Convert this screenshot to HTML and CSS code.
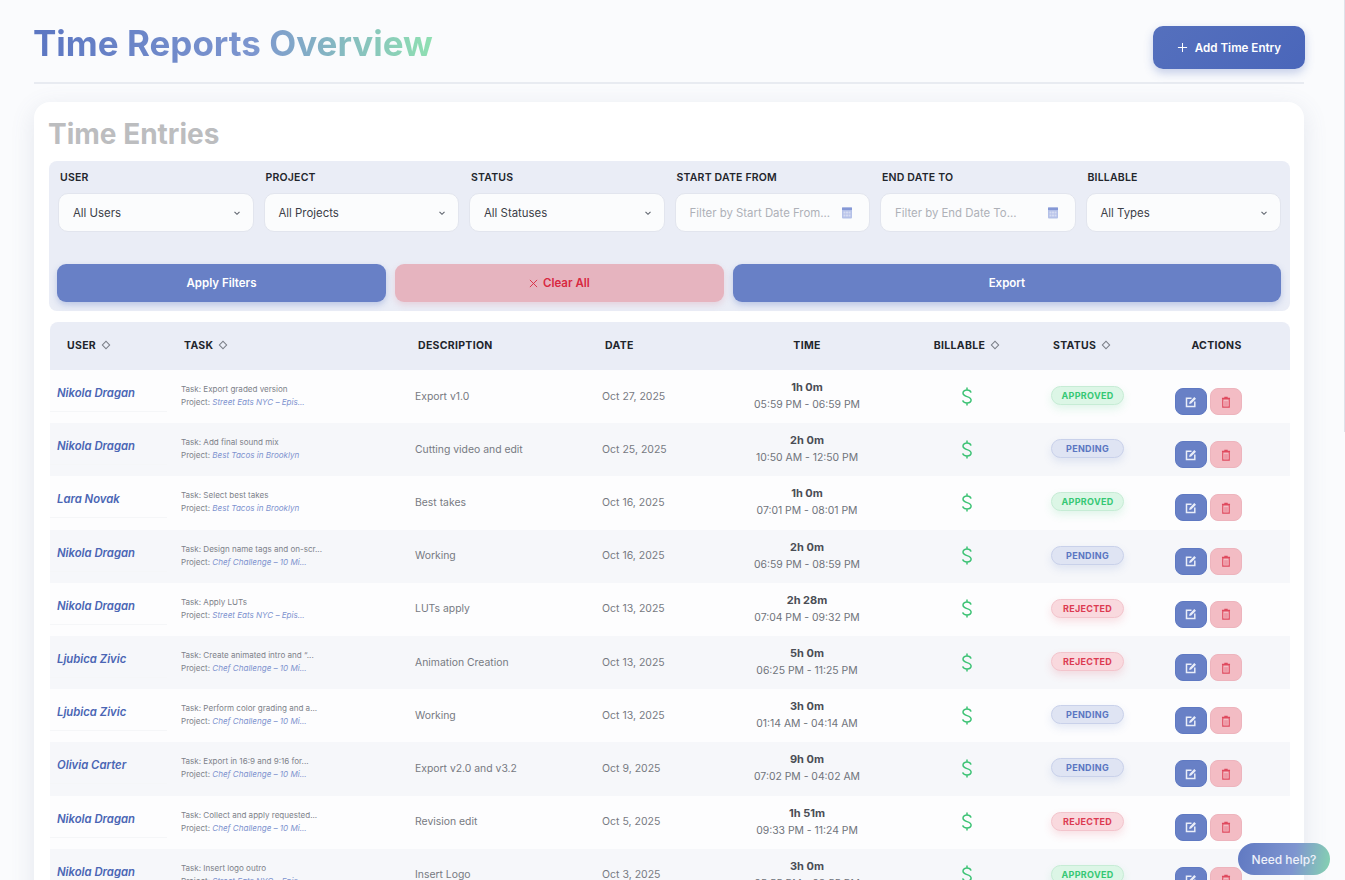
FILE: index.html
```html
<!DOCTYPE html>
<html lang="en">
<head>
<meta charset="utf-8">
<title>Time Reports Overview</title>
<link rel="stylesheet" href="styles.css">
</head>
<body>
<svg class="defs" width="0" height="0" aria-hidden="true">
  <symbol id="chev" viewBox="0 0 10 10"><path d="M2.500 3.800 5 6.300 7.500 3.800" fill="none" stroke="currentColor" stroke-width="1.100"/></symbol>
  <symbol id="cal" viewBox="0 0 10 12"><rect x="0" y="0.500" width="10" height="11" rx="1" fill="#b4c1e8"/><rect x="0" y="0.500" width="10" height="2.500" fill="#8598d6"/><path d="M1.500 4.500h2v2h-2zM4 4.500h2v2H4zM6.500 4.500h2v2h-2zM1.500 7.500h2v2h-2zM4 7.500h2v2H4zM6.500 7.500h2v2h-2z" fill="#d5dcf2"/></symbol>
  <symbol id="sort" viewBox="0 0 10 10"><rect x="2.400" y="2.400" width="5.200" height="5.200" transform="rotate(45 5 5)" fill="none" stroke="currentColor" stroke-width="1"/></symbol>
  <symbol id="dollar" viewBox="0 0 10 19"><path d="M5 .5v2.500M5 16v2.500M9 5.700C8.600 4 7.100 3 5 3 2.700 3 1 4.200 1 6.100 1 8.200 2.800 9 5 9.600c2.300.7 4.100 1.600 4.100 3.500 0 1.900-1.800 2.900-4.100 2.900-2.300 0-3.900-1-4.300-2.700" fill="none" stroke="currentColor" stroke-width="1.500"/></symbol>
  <symbol id="edit" viewBox="0 0 12 12"><path d="M6.500 2.200H1.500v8.300h8.300V5.500" fill="none" stroke="currentColor" stroke-width="1.500"/><path d="M4.500 5.900 9.300 1.100 11 2.800 6.200 7.600 4.200 8z" fill="currentColor"/></symbol>
  <symbol id="trash" viewBox="0 0 10 14"><path d="M3 2V.800h4V2h2.700v1.500H.300V2z" fill="currentColor"/><path d="M1.200 3.500h7.600V13H1.200z" fill="none" stroke="currentColor" stroke-width="1.300"/><path d="M2.800 6h4.400v5.500H2.800z" fill="currentColor" opacity=".3"/></symbol>
</svg>
<div class="page">
  <header class="top">
    <h1 class="title">Time Reports Overview</h1>
    <button class="add-btn"><svg class="plus" viewBox="0 0 12 12"><path d="M6 1v10M1 6h10" stroke="currentColor" stroke-width="1.100"/></svg>Add Time Entry</button>
  </header>
  <main class="card">
    <h2 class="card-title">Time Entries</h2>
    <section class="filters">
      <div class="filter-grid">
        <div class="field"><label>USER</label><div class="input"><span>All Users</span><svg class="chev"><use href="#chev"/></svg></div></div>
        <div class="field"><label>PROJECT</label><div class="input"><span>All Projects</span><svg class="chev"><use href="#chev"/></svg></div></div>
        <div class="field"><label>STATUS</label><div class="input"><span>All Statuses</span><svg class="chev"><use href="#chev"/></svg></div></div>
        <div class="field"><label>START DATE FROM</label><div class="input ph"><span>Filter by Start Date From...</span><svg class="cal"><use href="#cal"/></svg></div></div>
        <div class="field"><label>END DATE TO</label><div class="input ph"><span>Filter by End Date To...</span><svg class="cal"><use href="#cal"/></svg></div></div>
        <div class="field"><label>BILLABLE</label><div class="input"><span>All Types</span><svg class="chev"><use href="#chev"/></svg></div></div>
      </div>
      <div class="filter-actions">
        <button class="fbtn apply">Apply Filters</button>
        <button class="fbtn clear"><svg class="x" viewBox="0 0 10 10"><path d="M1 1l8 8M9 1l-8 8" stroke="currentColor" stroke-width="1"/></svg>Clear All</button>
        <button class="fbtn export">Export</button>
      </div>
    </section>
    <table class="entries">
      <colgroup><col class="c1"><col class="c2"><col class="c3"><col class="c4"><col class="c5"><col class="c6"><col class="c7"><col class="c8"></colgroup>
      <thead>
        <tr>
          <th class="h-user">USER<svg class="sort"><use href="#sort"/></svg></th>
          <th class="h-task">TASK<svg class="sort"><use href="#sort"/></svg></th>
          <th class="h-desc">DESCRIPTION</th>
          <th class="h-date">DATE</th>
          <th class="ctr">TIME</th>
          <th class="ctr">BILLABLE<svg class="sort"><use href="#sort"/></svg></th>
          <th class="h-status">STATUS<svg class="sort"><use href="#sort"/></svg></th>
          <th class="ctr">ACTIONS</th>
        </tr>
      </thead>
      <tbody id="rows">
        <tr><td class="u"><div class="name">Nikola Dragan</div></td><td class="t"><div>Task: Export graded version</div><div>Project: <em>Street Eats NYC – Epis...</em></div></td><td class="d">Export v1.0</td><td class="dt">Oct 27, 2025</td><td class="tm"><b>1h 0m</b><div>05:59 PM - 06:59 PM</div></td><td class="b"><svg class="dollar"><use href="#dollar"/></svg></td><td class="s"><span class="badge approved">APPROVED</span></td><td class="a"><div class="acts"><button class="ic ed"><svg><use href="#edit"/></svg></button><button class="ic del"><svg><use href="#trash"/></svg></button></div></td></tr>
        <tr><td class="u"><div class="name">Nikola Dragan</div></td><td class="t"><div>Task: Add final sound mix</div><div>Project: <em>Best Tacos in Brooklyn</em></div></td><td class="d">Cutting video and edit</td><td class="dt">Oct 25, 2025</td><td class="tm"><b>2h 0m</b><div>10:50 AM - 12:50 PM</div></td><td class="b"><svg class="dollar"><use href="#dollar"/></svg></td><td class="s"><span class="badge pending">PENDING</span></td><td class="a"><div class="acts"><button class="ic ed"><svg><use href="#edit"/></svg></button><button class="ic del"><svg><use href="#trash"/></svg></button></div></td></tr>
        <tr><td class="u"><div class="name">Lara Novak</div></td><td class="t"><div>Task: Select best takes</div><div>Project: <em>Best Tacos in Brooklyn</em></div></td><td class="d">Best takes</td><td class="dt">Oct 16, 2025</td><td class="tm"><b>1h 0m</b><div>07:01 PM - 08:01 PM</div></td><td class="b"><svg class="dollar"><use href="#dollar"/></svg></td><td class="s"><span class="badge approved">APPROVED</span></td><td class="a"><div class="acts"><button class="ic ed"><svg><use href="#edit"/></svg></button><button class="ic del"><svg><use href="#trash"/></svg></button></div></td></tr>
        <tr><td class="u"><div class="name">Nikola Dragan</div></td><td class="t"><div>Task: Design name tags and on-scr...</div><div>Project: <em>Chef Challenge – 10 Mi...</em></div></td><td class="d">Working</td><td class="dt">Oct 16, 2025</td><td class="tm"><b>2h 0m</b><div>06:59 PM - 08:59 PM</div></td><td class="b"><svg class="dollar"><use href="#dollar"/></svg></td><td class="s"><span class="badge pending">PENDING</span></td><td class="a"><div class="acts"><button class="ic ed"><svg><use href="#edit"/></svg></button><button class="ic del"><svg><use href="#trash"/></svg></button></div></td></tr>
        <tr><td class="u"><div class="name">Nikola Dragan</div></td><td class="t"><div>Task: Apply LUTs</div><div>Project: <em>Street Eats NYC – Epis...</em></div></td><td class="d">LUTs apply</td><td class="dt">Oct 13, 2025</td><td class="tm"><b>2h 28m</b><div>07:04 PM - 09:32 PM</div></td><td class="b"><svg class="dollar"><use href="#dollar"/></svg></td><td class="s"><span class="badge rejected">REJECTED</span></td><td class="a"><div class="acts"><button class="ic ed"><svg><use href="#edit"/></svg></button><button class="ic del"><svg><use href="#trash"/></svg></button></div></td></tr>
        <tr><td class="u"><div class="name">Ljubica Zivic</div></td><td class="t"><div>Task: Create animated intro and “...</div><div>Project: <em>Chef Challenge – 10 Mi...</em></div></td><td class="d">Animation Creation</td><td class="dt">Oct 13, 2025</td><td class="tm"><b>5h 0m</b><div>06:25 PM - 11:25 PM</div></td><td class="b"><svg class="dollar"><use href="#dollar"/></svg></td><td class="s"><span class="badge rejected">REJECTED</span></td><td class="a"><div class="acts"><button class="ic ed"><svg><use href="#edit"/></svg></button><button class="ic del"><svg><use href="#trash"/></svg></button></div></td></tr>
        <tr><td class="u"><div class="name">Ljubica Zivic</div></td><td class="t"><div>Task: Perform color grading and a...</div><div>Project: <em>Chef Challenge – 10 Mi...</em></div></td><td class="d">Working</td><td class="dt">Oct 13, 2025</td><td class="tm"><b>3h 0m</b><div>01:14 AM - 04:14 AM</div></td><td class="b"><svg class="dollar"><use href="#dollar"/></svg></td><td class="s"><span class="badge pending">PENDING</span></td><td class="a"><div class="acts"><button class="ic ed"><svg><use href="#edit"/></svg></button><button class="ic del"><svg><use href="#trash"/></svg></button></div></td></tr>
        <tr><td class="u"><div class="name">Olivia Carter</div></td><td class="t"><div>Task: Export in 16:9 and 9:16 for...</div><div>Project: <em>Chef Challenge – 10 Mi...</em></div></td><td class="d">Export v2.0 and v3.2</td><td class="dt">Oct 9, 2025</td><td class="tm"><b>9h 0m</b><div>07:02 PM - 04:02 AM</div></td><td class="b"><svg class="dollar"><use href="#dollar"/></svg></td><td class="s"><span class="badge pending">PENDING</span></td><td class="a"><div class="acts"><button class="ic ed"><svg><use href="#edit"/></svg></button><button class="ic del"><svg><use href="#trash"/></svg></button></div></td></tr>
        <tr><td class="u"><div class="name">Nikola Dragan</div></td><td class="t"><div>Task: Collect and apply requested...</div><div>Project: <em>Chef Challenge – 10 Mi...</em></div></td><td class="d">Revision edit</td><td class="dt">Oct 5, 2025</td><td class="tm"><b>1h 51m</b><div>09:33 PM - 11:24 PM</div></td><td class="b"><svg class="dollar"><use href="#dollar"/></svg></td><td class="s"><span class="badge rejected">REJECTED</span></td><td class="a"><div class="acts"><button class="ic ed"><svg><use href="#edit"/></svg></button><button class="ic del"><svg><use href="#trash"/></svg></button></div></td></tr>
        <tr><td class="u"><div class="name">Nikola Dragan</div></td><td class="t"><div>Task: Insert logo outro</div><div>Project: <em>Street Eats NYC – Epis...</em></div></td><td class="d">Insert Logo</td><td class="dt">Oct 3, 2025</td><td class="tm"><b>3h 0m</b><div>05:55 PM - 08:55 PM</div></td><td class="b"><svg class="dollar"><use href="#dollar"/></svg></td><td class="s"><span class="badge approved">APPROVED</span></td><td class="a"><div class="acts"><button class="ic ed"><svg><use href="#edit"/></svg></button><button class="ic del"><svg><use href="#trash"/></svg></button></div></td></tr>
      </tbody>
    </table>
  </main>
</div>
<button class="help">Need help?</button>
<div class="thumb"></div>
</body>
</html>
```
FILE: styles.css
```css
* { box-sizing: border-box; }
html, body { height: 100%; margin: 0; overflow: hidden; }
body { background: #fafbfd; font-family: Inter, "Liberation Sans", sans-serif; color: #2b2f38; }
button { font-family: inherit; border: 0; padding: 0; cursor: pointer; }
.defs { position: absolute; }
.page { padding: 0 41px 0 34px; }
.top { display: flex; justify-content: space-between; align-items: flex-start; height: 84px; border-bottom: 2px solid #e8ebf1; }
.title { margin: 21px 0 0 -1px; font-size: 35px; line-height: 44px; font-weight: 700; width: max-content; background: linear-gradient(90deg, #5b76c2 0%, #7d96cf 55%, #8fe0b2 100%); -webkit-background-clip: text; background-clip: text; color: transparent; }
.add-btn { margin: 26px -1px 0 0; width: 152px; height: 43px; border-radius: 10px; display: flex; align-items: center; justify-content: center; gap: 7px; background: linear-gradient(135deg, #5570bd, #4a66ba); color: #fff; font-size: 11.600px; font-weight: 600; box-shadow: 0 4px 10px rgba(74,102,186,.3); }
.plus { width: 11px; height: 11px; }
.card { margin-top: 18px; background: #fff; border-radius: 16px 16px 0 0; padding: 15px 14px 0 15px; box-shadow: 0 6px 24px rgba(90,105,140,.14); height: 900px; }
.card-title { margin: 0 0 10px -1px; font-size: 28px; line-height: 34px; font-weight: 700; color: #bcbdbf; }
.filters { background: #eaedf6; border-radius: 8px; padding: 9px; height: 150px; }
.filter-grid { display: grid; grid-template-columns: repeat(6, 1fr); gap: 10px; }
.field label { display: block; font-size: 10.500px; font-weight: 600; line-height: 16px; color: #22252c; padding-left: 2px; margin-bottom: 7px; letter-spacing: .2px; }
.input { height: 39px; background: #fbfcfd; border: 1px solid #e2e5ee; border-radius: 10px; display: flex; align-items: center; justify-content: space-between; padding: 0 11px 0 14px; font-size: 11.400px; color: #3c4048; }
.input.ph { color: #aeb1b8; padding-right: 17px; }
.chev { width: 10px; height: 10px; color: #5d626c; }
.cal { width: 10px; height: 12px; }
.filter-actions { display: flex; gap: 9px; margin-top: 32px; margin-left: -1px; }
.fbtn { height: 38px; border-radius: 9px; font-size: 11.500px; font-weight: 600; color: #fff; display: flex; align-items: center; justify-content: center; gap: 5px; }
.apply { flex: 3; background: #6880c6; box-shadow: 0 3px 6px rgba(104,128,198,.35); }
.clear { flex: 3; background: #e6b4bf; color: #d8293f; box-shadow: 0 3px 6px rgba(220,150,165,.3); }
.export { flex: 5; background: #6880c6; box-shadow: 0 3px 6px rgba(104,128,198,.35); }
.x { width: 9px; height: 9px; }
.entries { margin-top: 11px; margin-left: 1px; width: 1240px; table-layout: fixed; border-collapse: separate; border-spacing: 0; }
.c1 { width: 120px; } .c2 { width: 237px; } .c3 { width: 187px; } .c4 { width: 126px; } .c5 { width: 174px; } .c6 { width: 146px; } .c7 { width: 103px; } .c8 { width: 147px; }
thead th { height: 48px; background: #eaedf6; font-size: 10.500px; font-weight: 700; color: #22252c; text-align: left; letter-spacing: .3px; padding: 0 0 2px; white-space: nowrap; }
thead th:first-child { border-radius: 8px 0 0 0; }
thead th:last-child { border-radius: 0 8px 0 0; }
.h-user { padding-left: 17px; } .h-task { padding-left: 14px; } .h-desc { padding-left: 11px; } .h-date { padding-left: 11px; } .h-status { padding-left: 13px; }
thead th.ctr { text-align: center; }
.sort { width: 10px; height: 10px; color: #7b7f88; margin-left: 5px; vertical-align: -1px; }
tbody tr { height: 53.200px; }
tbody tr:nth-child(even) td { background: #f6f7fa; }
tbody td { padding: 0 0 1px; vertical-align: middle; background: #fdfdfe; }
tbody td.u { vertical-align: top; padding: 0; }
.name { height: 42px; padding: 15px 0 0 7px; margin-right: 3px; font-size: 11.300px; line-height: 16px; font-weight: 600; font-style: italic; color: #4a65b4; border-bottom: 1px solid #f5f6f8; white-space: nowrap; }
.t { padding-left: 11px; font-size: 8.050px; line-height: 13px; color: #7e828a; white-space: nowrap; }
.t em { color: #7e93cf; font-style: italic; }
.d { padding-left: 8px; font-size: 10.400px; color: #777a82; }
.dt { padding-left: 8px; font-size: 10.500px; color: #777a82; }
.tm { text-align: center; font-size: 10.400px; line-height: 17px; color: #6f737b; }
.tm b { font-size: 11px; font-weight: 700; color: #4a4d55; }
.b { text-align: center; }
.dollar { width: 10px; height: 19px; color: #3cc274; display: block; margin: 0 auto; }
tbody td.s { padding: 0 0 0 11px; }
.badge { display: block; width: 73px; height: 19px; line-height: 17px; margin-top: -2px; text-align: center; border-radius: 10px; font-size: 9px; font-weight: 700; letter-spacing: .3px; border: 1px solid; }
.approved { background: #dcf6e6; color: #35c874; border-color: #c6ecd5; box-shadow: 0 4px 8px rgba(60,200,120,.15); }
.pending { background: #dfe4f3; color: #5a76c2; border-color: #c9d1ea; box-shadow: 0 4px 8px rgba(90,118,194,.15); }
.rejected { background: #f9d9de; color: #dc3b52; border-color: #f3c4cc; box-shadow: 0 4px 8px rgba(220,60,80,.15); }
tbody td.a { padding: 0 0 0 32px; }
.acts { display: flex; gap: 3px; margin-top: 10px; }
.ic { width: 32px; height: 27px; border-radius: 8px; display: flex; align-items: center; justify-content: center; }
.ed { background: #6880c6; color: #e9edf8; border: 1px solid #5f79c2; }
.del { background: #f3bcc4; color: #df4a5f; border: 1px solid #edb4bd; }
.ic svg { width: 12px; height: 12px; }
.help { position: fixed; right: 15px; bottom: 5px; width: 92px; height: 32px; border-radius: 16px; background: linear-gradient(100deg, #6079c2 0%, #7f95d0 60%, #85d3b0 100%); color: #eef1fa; font-size: 12px; font-weight: 500; }
.thumb { position: fixed; top: 0; right: 0; width: 1px; height: 432px; background: #dfe2ea; }
```
